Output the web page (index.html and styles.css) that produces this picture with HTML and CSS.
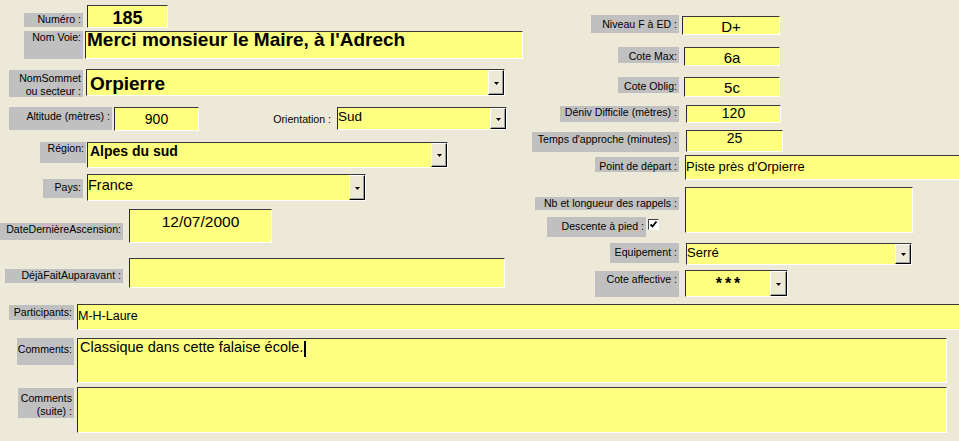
FILE: index.html
```html
<!DOCTYPE html>
<html lang="fr">
<head>
<meta charset="utf-8">
<title>Voie</title>
<link rel="stylesheet" href="styles.css">
</head>
<body>
<div class="form">
  <div class="top">
    <div class="left">
      <div class="row r-num">
        <div class="lbl l-num">Numéro :</div>
        <div class="fld f-num">185</div>
      </div>
      <div class="row r-voie">
        <div class="lbl l-voie">Nom Voie:</div>
        <div class="fld f-voie">Merci monsieur le Maire, à l'Adrech</div>
      </div>
      <div class="row r-som">
        <div class="lbl l-som">NomSommet<br>ou secteur :</div>
        <div class="fld combo f-som"><span class="val v-som">Orpierre</span><span class="btn"><svg width="5" height="3" viewBox="0 0 5 3"><polygon points="0,0 5,0 2.5,3" fill="#000"/></svg></span></div>
      </div>
      <div class="row r-alt">
        <div class="lbl l-alt">Altitude (mètres) :</div>
        <div class="fld f-alt">900</div>
        <div class="plain l-ori">Orientation :</div>
        <div class="fld combo f-ori"><span class="val v-ori">Sud</span><span class="btn"><svg width="5" height="3" viewBox="0 0 5 3"><polygon points="0,0 5,0 2.5,3" fill="#000"/></svg></span></div>
      </div>
      <div class="row r-reg">
        <div class="lbl l-reg">Région:</div>
        <div class="fld combo f-reg"><span class="val v-reg">Alpes du sud</span><span class="btn"><svg width="5" height="3" viewBox="0 0 5 3"><polygon points="0,0 5,0 2.5,3" fill="#000"/></svg></span></div>
      </div>
      <div class="row r-pays">
        <div class="lbl l-pays">Pays:</div>
        <div class="fld combo f-pays"><span class="val v-pays">France</span><span class="btn"><svg width="5" height="3" viewBox="0 0 5 3"><polygon points="0,0 5,0 2.5,3" fill="#000"/></svg></span></div>
      </div>
      <div class="row r-date">
        <div class="lbl l-date">DateDernièreAscension:</div>
        <div class="fld f-date">12/07/2000</div>
      </div>
      <div class="row r-deja">
        <div class="lbl l-deja">DéjàFaitAuparavant :</div>
        <div class="fld f-deja"></div>
      </div>
    </div>

    <div class="right">
      <div class="row r1">
        <div class="rlab"><div class="lbl l-niv">Niveau F à ED :</div></div>
        <div class="fld f-niv">D+</div>
      </div>
      <div class="row r2">
        <div class="rlab"><div class="lbl l-max">Cote Max:</div></div>
        <div class="fld f-max">6a</div>
      </div>
      <div class="row r3">
        <div class="rlab"><div class="lbl l-obl">Cote Oblig:</div></div>
        <div class="fld f-obl">5c</div>
      </div>
      <div class="row r4">
        <div class="rlab"><div class="lbl l-den">Déniv Difficile (mètres) :</div></div>
        <div class="fld f-den">120</div>
      </div>
      <div class="row r5">
        <div class="rlab"><div class="lbl l-tps">Temps d'approche (minutes) :</div></div>
        <div class="fld f-tps">25</div>
      </div>
      <div class="row r6">
        <div class="rlab"><div class="lbl l-pt">Point de départ :</div></div>
        <div class="fld open f-pt">Piste près d'Orpierre</div>
      </div>
      <div class="row r7">
        <div class="rlab col">
          <div class="lbl l-nb">Nb et longueur des rappels :</div>
          <div class="desc">
            <div class="lbl l-desc">Descente à pied :</div>
            <div class="chk"><svg width="9" height="9" viewBox="0 0 9 9"><path d="M1.5 4.5 L3.5 6.5 L7.5 1.5" fill="none" stroke="#000" stroke-width="1.8"/></svg></div>
          </div>
        </div>
        <div class="fld f-nb"></div>
      </div>
      <div class="row r8">
        <div class="rlab"><div class="lbl l-eq">Equipement :</div></div>
        <div class="fld combo f-eq"><span class="val v-eq">Serré</span><span class="btn"><svg width="5" height="3" viewBox="0 0 5 3"><polygon points="0,0 5,0 2.5,3" fill="#000"/></svg></span></div>
      </div>
      <div class="row r9">
        <div class="rlab"><div class="lbl l-aff">Cote affective :</div></div>
        <div class="fld combo f-aff"><span class="val v-aff">***</span><span class="btn b-aff"><svg width="5" height="3" viewBox="0 0 5 3"><polygon points="0,0 5,0 2.5,3" fill="#000"/></svg></span></div>
      </div>
    </div>
  </div>

  <div class="bottom">
    <div class="row r-par">
      <div class="lbl l-par">Participants:</div>
      <div class="fld open f-par">M-H-Laure</div>
    </div>
    <div class="row r-com">
      <div class="lbl l-com">Comments:</div>
      <div class="fld f-com">Classique dans cette falaise école.<span class="caret"></span></div>
    </div>
    <div class="row r-com2">
      <div class="lbl l-com2">Comments<br>(suite) :</div>
      <div class="fld f-com2"></div>
    </div>
  </div>
</div>
</body>
</html>
```

FILE: styles.css
```css
* { box-sizing: border-box; }
html, body { margin: 0; padding: 0; overflow: hidden; }
body {
  background: #ece9d8;
  font-family: "Liberation Sans", Arial, sans-serif;
  width: 959px;
  height: 441px;
  color: #000;
}
.form { width: 959px; }
.top { display: flex; }
.left { width: 525px; flex: none; padding-top: 4px; }
.right { flex: 1; padding-top: 15px; }
.row { display: flex; align-items: flex-start; }

/* labels */
.lbl {
  background: #c0c0c0;
  font-size: 10.6px;
  line-height: 13px;
  text-align: right;
  padding-right: 2px;
  white-space: nowrap;
  flex: none;
}
.plain {
  font-size: 10.6px;
  line-height: 13px;
  text-align: right;
  white-space: nowrap;
  flex: none;
}

/* fields */
.fld {
  background: #ffff80;
  border-style: solid;
  border-width: 1px;
  border-color: #3a3a3a #fff #fff #2a2a2a;
  flex: none;
  line-height: 0.74;
  white-space: nowrap;
  font-size: 13px;
}
.fld.open { border-right: none; flex: 1; }
.center { text-align: center; }
.combo { display: flex; align-items: stretch; }
.combo .val { flex: 1; display: block; }
.btn {
  width: 16px;
  flex: none;
  background: #ece9d8;
  border: 1px solid;
  border-color: #fff #000 #000 #fff;
  box-shadow: inset -1px -1px 0 #a0a0a0;
  display: flex;
  align-items: center;
  justify-content: center;
}
.btn svg { display: block; margin-top: 1px; }
.b-aff { width: 17px; }

/* left column */
.r-num { height: 27px; }
.r-voie { height: 38px; }
.r-som { height: 38px; }
.r-alt { height: 35px; }
.r-reg { height: 32px; }
.r-pays { height: 35px; }
.r-date { height: 49px; }
.r-deja { height: 30px; }

.l-num { margin: 9px 0 0 24px; width: 59px; height: 14px; }
.f-num { margin: 1px 0 0 4px; width: 81px; height: 23px; font-size: 18px; font-weight: bold; text-align: center; padding-top: 6px; }

.l-voie { margin-left: 24px; width: 59px; height: 28px; }
.f-voie { margin-left: 2px; width: 438px; height: 28px; font-size: 19px; font-weight: bold; padding: 1px 0 0 1px; }

.l-som { margin: 1px 0 0 9px; width: 74px; height: 27px; padding-top: 2px; }
.f-som { margin-left: 3px; width: 419px; height: 27px; }
.v-som { font-size: 19px; font-weight: bold; padding: 7px 0 0 3px; }

.l-alt { margin-left: 9px; width: 103px; height: 23px; padding-top: 3px; }
.f-alt { margin-left: 2px; width: 85px; height: 24px; font-size: 14px; text-align: center; padding-top: 6px; }
.l-ori { width: 138px; height: 23px; padding: 6px 6px 0 0; }
.f-ori { width: 170px; height: 23px; }
.v-ori { font-size: 13.5px; padding-top: 4px; }

.l-reg { margin-left: 40px; width: 46px; height: 21px; }
.f-reg { margin-left: 1px; width: 361px; height: 26px; }
.v-reg { font-size: 14px; font-weight: bold; padding: 3px 0 0 2px; }

.l-pays { margin: 5px 0 0 43px; width: 40px; height: 19px; padding-top: 2px; }
.f-pays { margin-left: 4px; width: 279px; height: 27px; }
.v-pays { font-size: 14.5px; padding-top: 5px; }

.l-date { margin-top: 14px; width: 123px; height: 17px; }
.f-date { margin-left: 6px; width: 143px; height: 34px; font-size: 15.5px; text-align: center; padding-top: 6px; }

.l-deja { margin: 11px 0 0 5px; width: 118px; height: 14px; }
.f-deja { margin-left: 6px; width: 376px; height: 30px; }

/* right column */
.rlab { width: 154px; flex: none; display: flex; justify-content: flex-end; }
.rlab.col { flex-direction: column; align-items: flex-end; justify-content: flex-start; }
.r1 { height: 32px; }
.r2 { height: 30px; }
.r3 { height: 28px; }
.r4 { height: 25px; }
.r5 { height: 25px; }
.r6 { height: 32px; }
.r7 { height: 56px; }
.r8 { height: 27px; }
.r9 { height: 27px; }

.l-niv { width: 88px; height: 18px; padding-top: 3px; }
.f-niv { margin: 1px 0 0 3px; width: 98px; height: 19px; font-size: 15px; text-align: center; padding-top: 4px; }
.l-max, .l-obl { width: 61px; height: 16px; padding-top: 3px; }
.f-max { margin-left: 5px; width: 96px; height: 19px; font-size: 15px; text-align: center; padding-top: 4px; }
.f-obl { margin-left: 5px; width: 96px; height: 20px; font-size: 15px; text-align: center; padding-top: 4px; }
.l-den { margin-top: 1px; width: 119px; height: 16px; }
.f-den { margin-left: 7px; width: 95px; height: 18px; font-size: 14px; text-align: center; padding-top: 2px; }
.l-tps { margin-top: 2px; width: 147px; height: 20px; padding-top: 1px; }
.f-tps { margin-left: 7px; width: 97px; height: 22px; font-size: 14px; text-align: center; padding-top: 2px; }
.l-pt { margin-top: 2px; width: 84px; height: 15px; padding-top: 3px; }
.f-pt { margin-left: 6px; height: 25px; font-size: 13px; padding-top: 6px; }

.l-nb { margin-top: 10px; width: 144px; height: 13px; }
.desc { display: flex; align-items: flex-start; align-self: stretch; margin-top: 7px; }
.l-desc { margin-left: 22px; width: 99px; height: 20px; padding-top: 3px; }
.chk {
  margin: 2px 0 0 2px;
  width: 11px;
  height: 11px;
  background: #fff;
  border: 1px solid;
  border-color: #404040 #fff #fff #404040;
  display: flex;
  align-items: center;
  justify-content: center;
}
.chk svg { display: block; }
.f-nb { margin-left: 6px; width: 228px; height: 46px; }

.l-eq { width: 69px; height: 20px; padding-top: 3px; }
.f-eq { margin-left: 7px; width: 226px; height: 22px; }
.v-eq { font-size: 13px; padding-top: 4px; }
.l-aff { margin-top: 1px; width: 84px; height: 26px; padding-top: 2px; }
.f-aff { margin-left: 6px; width: 103px; height: 27px; }
.v-aff { font-size: 16px; font-weight: bold; letter-spacing: 3px; text-align: center; padding: 7px 0 0 3px; }

/* bottom */
.bottom { margin-top: 6px; }
.r-par { height: 35px; }
.r-com { height: 49px; }
.r-com2 { height: 46px; }
.l-par { margin: 2px 0 0 9px; width: 65px; height: 15px; padding-top: 1px; }
.f-par { margin: 1px 0 0 3px; height: 26px; font-size: 12.5px; padding-top: 7px; }
.l-com { margin-left: 17px; width: 57px; height: 27px; padding-top: 5px; }
.f-com { margin-left: 3px; width: 870px; height: 45px; font-size: 14.5px; padding: 3px 0 0 2px; }
.caret { display: inline-block; width: 2px; height: 16px; background: #000; vertical-align: top; margin: -1px 0 0 1px; }
.l-com2 { margin: 1px 0 0 18px; width: 56px; height: 30px; padding-top: 4px; }
.f-com2 { margin-left: 3px; width: 870px; height: 46px; }
```
